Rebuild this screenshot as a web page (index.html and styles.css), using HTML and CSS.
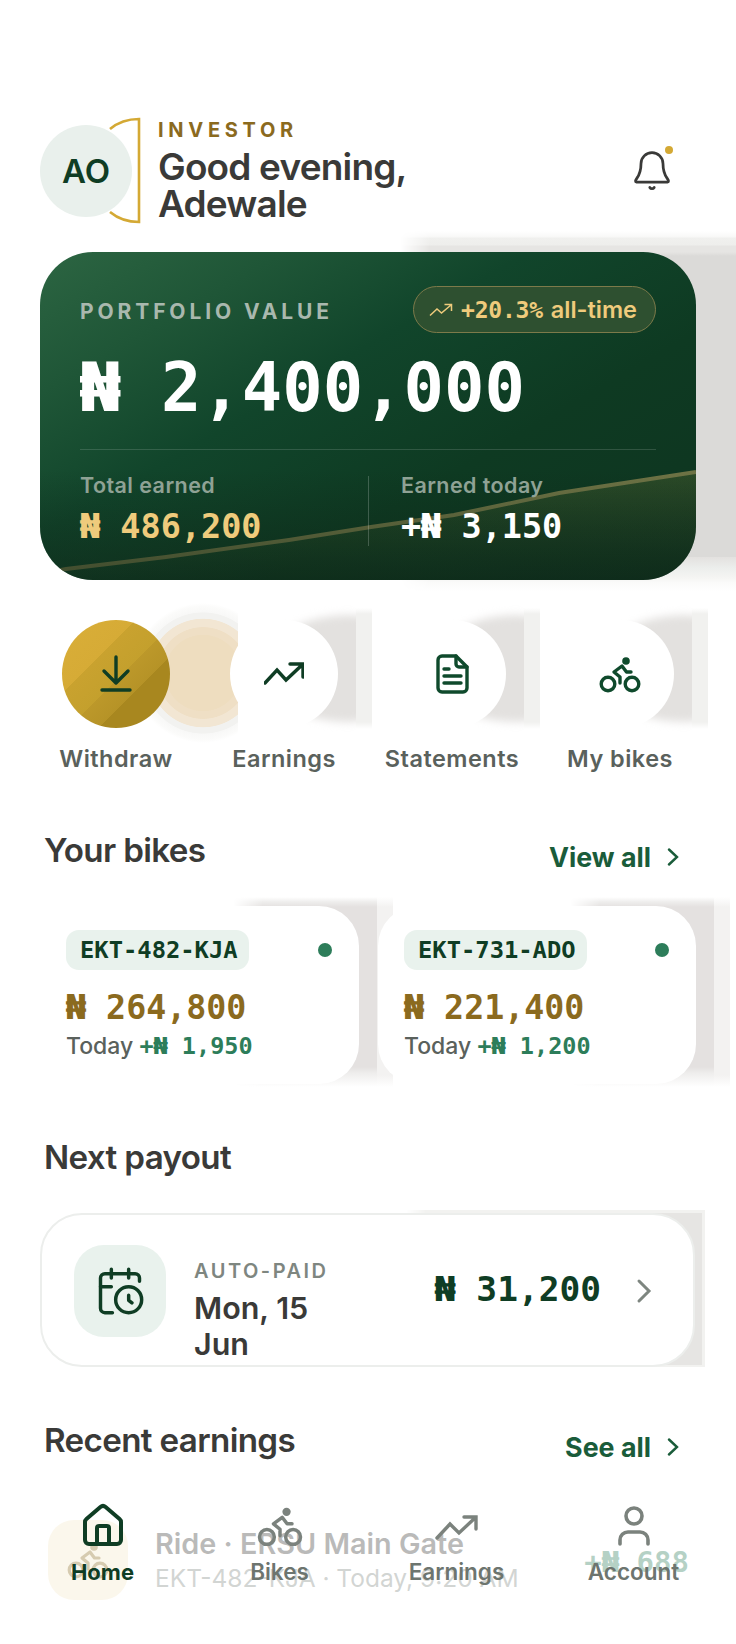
FILE: index.html
```html
<!DOCTYPE html>
<html>
	<head>
		<meta charset="UTF-8">
		<title>Investor home</title>
		<link rel="stylesheet" href="styles.css">
	</head>
	<body>
		<div class="screen">
			<div class="top">
				<div class="avatar-wrap">
					<svg class="ring" width="40" height="107" viewBox="0 0 40 107"><path d="M2 12Q14 2 31 2V105Q14 105 2 95" fill="none" stroke="#d4a934" stroke-width="2.6"/></svg>
					<div class="avatar">AO</div>
				</div>
				<div class="hello">
					<div class="role">INVESTOR</div>
					<h1>Good evening,<br>Adewale</h1>
				</div>
				<div class="bell">
					<svg width="44" height="44" viewBox="0 0 24 24" fill="none" stroke="#3a3a38" stroke-width="1.5" stroke-linecap="round" stroke-linejoin="round"><path d="M6 8a6 6 0 0 1 12 0c0 7 3 8 3 9.500a.5.5 0 0 1-.5.5H3.500a.5.5 0 0 1-.5-.5C3 16 6 15 6 8"/><path d="M10.800 21a1.400 1.400 0 0 0 2.400 0"/></svg>
					<span class="bell-dot"></span>
				</div>
			</div>

			<div class="hero-wrap">
				<div class="hero">
					<svg class="chart" width="656" height="328" viewBox="0 0 656 328">
						<defs>
							<linearGradient id="fill" x1="0" y1="0" x2="0" y2="1">
								<stop offset="0" stop-color="#c9b04a" stop-opacity=".16"/>
								<stop offset="1" stop-color="#c9b04a" stop-opacity="0"/>
							</linearGradient>
						</defs>
						<path d="M0 328V322L26 317 126 305 249 288 331 275 414 263 519 241 656 220V328Z" fill="url(#fill)"/>
						<path d="M0 322L26 317 126 305 249 288 331 275 414 263 519 241 656 220" fill="none" stroke="#6e7345" stroke-width="4"/>
					</svg>
					<div class="hero-top">
						<span class="hero-label">PORTFOLIO VALUE</span>
						<span class="pill">
							<svg width="24" height="14" viewBox="0 0 24 14" fill="none" stroke="#efcb7c" stroke-width="1.500"><path d="M1 12.500L8 6l4.500 4L22 2M15.500 1.500H22.500V8"/></svg>
							<b>+20.3%</b> all-time
						</span>
					</div>
					<div class="hero-amount">₦ 2,400,000</div>
					<div class="hero-line"></div>
					<div class="hero-stats">
						<div class="stat">
							<div class="stat-label">Total earned</div>
							<div class="stat-value gold">₦ 486,200</div>
						</div>
						<div class="stat stat-right">
							<div class="stat-label">Earned today</div>
							<div class="stat-value">+₦ 3,150</div>
						</div>
					</div>
				</div>
			</div>

			<div class="actions">
				<div class="action">
					<div class="btn btn-gold">
						<span class="disc">
							<svg width="40" height="40" viewBox="0 0 40 40" fill="none" stroke="#0f3d24" stroke-width="3.400" stroke-linecap="round" stroke-linejoin="round"><path d="M20 3V29M8 17L20 29 32 17M6 36H34"/></svg>
						</span>
					</div>
					<span class="action-label">Withdraw</span>
				</div>
				<div class="action">
					<div class="btn btn-white">
						<span class="disc">
							<svg width="40" height="40" viewBox="0 0 40 40" fill="none" stroke="#0f3d24" stroke-width="3.400" stroke-linecap="round"><path d="M1 29L13 16 22 26 39 10M26 10H39V23"/></svg>
						</span>
					</div>
					<span class="action-label">Earnings</span>
				</div>
				<div class="action">
					<div class="btn btn-white">
						<span class="disc">
							<svg width="40" height="40" viewBox="0 0 40 40" fill="none" stroke="#0f4a2c" stroke-width="3.400" stroke-linecap="round" stroke-linejoin="round"><path d="M10 2H24L35 13V34A4 4 0 0 1 31 38H10A4 4 0 0 1 6 34V6A4 4 0 0 1 10 2Z"/><path d="M24 2V10A3 3 0 0 0 27 13H35"/><path d="M12 15H17M12 22H29M12 29H29"/></svg>
						</span>
					</div>
					<span class="action-label">Statements</span>
				</div>
				<div class="action">
					<div class="btn btn-white">
						<span class="disc">
							<svg width="44" height="44" viewBox="0 0 44 44" fill="none" stroke="#0f4a2c" stroke-width="3.400" stroke-linecap="round" stroke-linejoin="round"><circle cx="28" cy="9" r="3.800" fill="#0f4a2c" stroke="none"/><circle cx="10" cy="32" r="6.800"/><circle cx="34" cy="32" r="6.800"/><path d="M33 20H28.500L24 14 16 20 22 25V31"/></svg>
						</span>
					</div>
					<span class="action-label">My bikes</span>
				</div>
			</div>

			<div class="sec-head head-bikes">
				<h2>Your bikes</h2>
				<a class="more">View all <svg width="12" height="18" viewBox="0 0 12 18" fill="none" stroke="#1a5c3a" stroke-width="2.400" stroke-linecap="round"><path d="M2 1.500L10 9 2 16.500"/></svg></a>
			</div>
			<div class="bikes">
				<div class="bike">
					<div class="bike-top">
						<span class="plate">EKT-482-KJA</span>
						<span class="live"></span>
					</div>
					<div class="bike-total">₦ 264,800</div>
					<div class="bike-today">Today <b>+₦ 1,950</b></div>
				</div>
				<div class="bike">
					<div class="bike-top">
						<span class="plate">EKT-731-ADO</span>
						<span class="live"></span>
					</div>
					<div class="bike-total">₦ 221,400</div>
					<div class="bike-today">Today <b>+₦ 1,200</b></div>
				</div>
			</div>

			<div class="sec-head head-payout">
				<h2>Next payout</h2>
			</div>
			<div class="payout">
				<div class="payout-icon">
					<svg width="52" height="52" viewBox="0 0 24 24" fill="none" stroke="#0f3d24" stroke-width="1.600" stroke-linecap="round" stroke-linejoin="round"><path d="M21 7.500V6a2 2 0 0 0-2-2H5a2 2 0 0 0-2 2v14a2 2 0 0 0 2 2h3.500"/><path d="M16 2v4M8 2v4M3 10h5M17.500 17.500L16 16.300V14"/><circle cx="16" cy="16" r="6"/></svg>
				</div>
				<div class="payout-text">
					<div class="payout-label">AUTO-PAID</div>
					<div class="payout-date">Mon, 15<br>Jun</div>
				</div>
				<div class="payout-amount">₦ 31,200</div>
				<svg class="payout-arrow" width="16" height="26" viewBox="0 0 16 26" fill="none" stroke="#7e8680" stroke-width="3" stroke-linecap="round"><path d="M3 3L13 13 3 23"/></svg>
			</div>

			<div class="sec-head head-recent">
				<h2>Recent earnings</h2>
				<a class="more">See all <svg width="12" height="18" viewBox="0 0 12 18" fill="none" stroke="#1a5c3a" stroke-width="2.400" stroke-linecap="round"><path d="M2 1.500L10 9 2 16.500"/></svg></a>
			</div>
			<div class="earning">
				<div class="earning-icon">
					<svg width="44" height="44" viewBox="0 0 44 44" fill="none" stroke="#8b6a1e" stroke-width="3.200" stroke-linecap="round" stroke-linejoin="round"><circle cx="28" cy="9" r="3.800" fill="#8b6a1e" stroke="none"/><circle cx="10" cy="32" r="6.800"/><circle cx="34" cy="32" r="6.800"/><path d="M33 20H28.500L24 14 16 20 22 25V31"/></svg>
				</div>
				<div class="earning-text">
					<div class="earning-title">Ride · ERSU Main Gate</div>
					<div class="earning-sub">EKT-482-KJA · Today, 9:20 AM</div>
				</div>
				<div class="earning-amount">+₦ 688</div>
			</div>

			<div class="tabs">
				<div class="tab tab-on">
					<svg width="48" height="48" viewBox="0 0 24 24" fill="none" stroke="#0f3d24" stroke-width="2" stroke-linecap="round" stroke-linejoin="round"><path d="M15 21v-8a1 1 0 0 0-1-1h-4a1 1 0 0 0-1 1v8"/><path d="M3 10a2 2 0 0 1 .709-1.528l7-5.999a2 2 0 0 1 2.582 0l7 5.999A2 2 0 0 1 21 10v9a2 2 0 0 1-2 2H5a2 2 0 0 1-2-2z"/></svg>
					<span>Home</span>
				</div>
				<div class="tab">
					<svg width="48" height="48" viewBox="0 0 44 44" fill="none" stroke="#7b827d" stroke-width="3.200" stroke-linecap="round" stroke-linejoin="round"><circle cx="28" cy="9" r="3.800" fill="#7b827d" stroke="none"/><circle cx="10" cy="32" r="6.800"/><circle cx="34" cy="32" r="6.800"/><path d="M33 20H28.500L24 14 16 20 22 25V31"/></svg>
					<span>Bikes</span>
				</div>
				<div class="tab">
					<svg width="48" height="48" viewBox="0 0 48 48" fill="none" stroke="#7b827d" stroke-width="3.400" stroke-linecap="round"><path d="M4 36L17 22 26 31 43 15M31 15H43V27"/></svg>
					<span>Earnings</span>
				</div>
				<div class="tab">
					<svg width="48" height="48" viewBox="0 0 24 24" fill="none" stroke="#7b827d" stroke-width="1.800" stroke-linecap="round" stroke-linejoin="round"><path d="M19 21v-2a4 4 0 0 0-4-4H9a4 4 0 0 0-4 4v2"/><circle cx="12" cy="7" r="4"/></svg>
					<span>Account</span>
				</div>
			</div>
		</div>
	</body>
</html>
```

FILE: styles.css
```css
*{
	padding: 0;
	margin: 0;
	box-sizing: border-box;
}
html{
	background: #fff;
}
body{
	font-family: Inter, "Liberation Sans", sans-serif;
	color: #3a3a38;
}
.screen{
	position: relative;
	width: 736px;
	height: 1644px;
	padding: 118px 40px 0;
	overflow: hidden;
}

/* header */
.top{
	display: flex;
	align-items: center;
	height: 105px;
}
.avatar-wrap{
	position: relative;
	width: 99px;
	height: 105px;
	display: flex;
	align-items: center;
}
.ring{
	position: absolute;
	left: 68px;
	top: -1px;
}
.avatar{
	position: relative;
	width: 92px;
	height: 92px;
	border-radius: 50%;
	background: #e9f0ec;
	color: #0f3d24;
	font-size: 33px;
	font-weight: 600;
	line-height: 92px;
	text-align: center;
}
.hello{
	margin-left: 19px;
	margin-top: -2px;
}
.role{
	margin-bottom: 6px;
	font-size: 20px;
	font-weight: 700;
	letter-spacing: .235em;
	line-height: 24px;
	color: #8b6a1e;
}
h1{
	font-size: 37px;
	font-weight: 600;
	line-height: 37px;
	letter-spacing: -.022em;
}
.bell{
	position: relative;
	margin-left: auto;
	margin-right: 22px;
	width: 44px;
	height: 44px;
}
.bell-dot{
	position: absolute;
	right: 1px;
	top: -3px;
	width: 8px;
	height: 8px;
	border-radius: 50%;
	background: #d4a934;
}

/* portfolio card */
.hero-wrap{
	position: relative;
	margin-top: 29px;
}
.hero-wrap::before{
	content: "";
	position: absolute;
	left: 360px;
	right: -40px;
	top: -24px;
	bottom: -12px;
	background: linear-gradient(to bottom, #fff 0, #fff 3px, #f8f8f7 9px, #f0f0ee 10px, #eeeeec 17px, #e6e5e3 18px, #e6e5e3 24px, #dbdad8 28px, #dbdad8 329px, #e3e1df 329px, #eceeec 340px, #f5f5f3 350px, #fbfbfa 355px, #fff 364px);
	-webkit-mask-image: linear-gradient(to right, transparent, #000 30px);
	mask-image: linear-gradient(to right, transparent, #000 30px);
}
.hero{
	position: relative;
	height: 328px;
	padding: 34px 40px 0;
	border-radius: 53px;
	overflow: hidden;
	color: #fff;
	background: linear-gradient(150deg, #2c6542 0%, #1f5637 20%, #11452b 40%, #0e3a22 65%, #0e3420 100%);
}
.chart{
	position: absolute;
	left: 0;
	top: 0;
}
.hero::after{
	content: "";
	position: absolute;
	left: 0;
	right: 0;
	bottom: 0;
	height: 110px;
	background: linear-gradient(to bottom, transparent, rgba(15,35,22,.5));
}
.hero-top,.hero-amount,.hero-line,.hero-stats{
	position: relative;
	z-index: 1;
}
.hero-top{
	display: flex;
	justify-content: space-between;
	align-items: center;
	height: 47px;
}
.hero-label{
	position: relative;
	top: 2px;
	font-size: 21px;
	font-weight: 700;
	letter-spacing: .185em;
	color: #a9b8ae;
}
.pill{
	display: flex;
	align-items: center;
	gap: 8px;
	height: 47px;
	padding: 0 18px 0 15px;
	border: 1.5px solid #7d7a4a;
	border-radius: 24px;
	background: #2e5030;
	color: #efcb7c;
	font-size: 23.5px;
	font-weight: 600;
}
.pill b{
	font-family: "DejaVu Sans Mono", monospace;
	font-size: 23px;
	letter-spacing: -.01em;
}
.hero-amount{
	margin-top: 13px;
	font-family: "DejaVu Sans Mono", monospace;
	font-size: 67.200px;
	font-weight: 700;
	line-height: 84px;
	white-space: nowrap;
}
.hero-line{
	height: 1px;
	margin-top: 19px;
	background: rgba(255,255,255,.14);
}
.hero-stats{
	display: flex;
	margin-top: 26px;
}
.stat{
	width: 289px;
	height: 70px;
}
.stat-right{
	padding-left: 32px;
	border-left: 1px solid rgba(255,255,255,.2);
}
.stat-label{
	margin-top: -3px;
	font-size: 21.500px;
	font-weight: 600;
	line-height: 24px;
	letter-spacing: .02em;
	color: #8fa295;
}
.stat-value{
	margin-top: 11px;
	font-family: "DejaVu Sans Mono", monospace;
	font-size: 33.5px;
	font-weight: 700;
	line-height: 38px;
	white-space: nowrap;
}
.gold{
	color: #efcb7c;
}

/* quick actions */
.actions{
	display: grid;
	grid-template-columns: repeat(4, 168px);
	margin: 40px -8px 0;
}
.action{
	display: flex;
	flex-direction: column;
	align-items: center;
}
.btn{
	position: relative;
	width: 108px;
	height: 108px;
}
.disc{
	position: relative;
	display: flex;
	align-items: center;
	justify-content: center;
	width: 108px;
	height: 108px;
	border-radius: 50%;
	background: #fff;
}
.btn-gold .disc{
	background: linear-gradient(135deg, #d9ae38 0, #d6ab36 34%, #c9a22f 34%, #c4a02d 53%, #bc982a 53%, #b69327 67%, #a8871f 67%, #a8871f 100%);
}
.btn-gold::before{
	content: "";
	position: absolute;
	left: 71px;
	top: -17px;
	width: 140px;
	height: 140px;
	border-radius: 50%;
	clip-path: inset(0 35px 0 0);
	background: radial-gradient(circle closest-side, #eeddbf 0, #eeddbf 54%, #efdfc5 55%, #efdfc5 65%, #f2e6d3 66%, #f2e6d3 77%, #f2f2f0 78%, #f2f2f0 86%, #f8f8f7 87%, #fbfbfa 95%, #fff 100%);
}
.btn-white::before{
	content: "";
	position: absolute;
	left: 35px;
	width: 135px;
	top: -5px;
	height: 107px;
	z-index: -1;
	border-radius: 90px 54px 54px 90px / 54px;
	background: #e3e1df;
	filter: blur(4px);
	clip-path: inset(-20px 44px -20px -20px);
}
.btn-white::after{
	content: "";
	position: absolute;
	left: 126px;
	width: 16px;
	top: -12px;
	bottom: -1px;
	z-index: -1;
	background: linear-gradient(to bottom, #fff 0, #f1f1ef 6px, #f1f1ef 114px, #fff 121px);
}
.action-label{
	margin-top: 17px;
	font-size: 23.5px;
	font-weight: 600;
	line-height: 28px;
	letter-spacing: .02em;
	color: #5a615c;
}

/* sections */
.sec-head{
	display: flex;
	justify-content: space-between;
	align-items: baseline;
	padding-left: 4px;
}
.head-bikes{
	margin-top: 57px;
}
.head-payout{
	margin-top: 53px;
}
.head-recent{
	margin-top: 53px;
}
h2{
	font-size: 33.2px;
	font-weight: 600;
	line-height: 40px;
	letter-spacing: -.02em;
}
.more{
	display: flex;
	align-items: center;
	gap: 16px;
	padding-right: 17px;
	font-size: 26.8px;
	font-weight: 700;
	color: #1a5c3a;
	position: relative;
	top: 5px;
}

/* bikes */
.bikes{
	display: flex;
	gap: 19px;
	margin-top: 36px;
}
.bike{
	position: relative;
	width: 319px;
	height: 178px;
	padding: 24px 24px 0 26px;
	border-radius: 40px;
	background: #fff;
}
.bike::before{
	content: "";
	position: absolute;
	right: -18px;
	width: 144px;
	top: -9px;
	bottom: -3px;
	z-index: -1;
	background: linear-gradient(to bottom, #fff 0, #eeedec 5px, #e4e1e0 10px, #e4e1e0 170px, #eeedec 176px, #fff 190px);
	-webkit-mask-image: linear-gradient(to right, transparent, #000 30px);
	mask-image: linear-gradient(to right, transparent, #000 30px);
}
.bike::after{
	content: "";
	position: absolute;
	right: -34px;
	width: 16px;
	top: -9px;
	bottom: -3px;
	z-index: -1;
	background: linear-gradient(to bottom, #fff 0, #f3f2f1 10px, #f3f2f1 178px, #fff 190px);
}
.bike + .bike{
	width: 318px;
}
.bike-top{
	display: flex;
	justify-content: space-between;
	align-items: center;
}
.plate{
	height: 40px;
	padding: 1px 11px 0 14px;
	border-radius: 13px;
	background: #e9f2ed;
	color: #0f3d24;
	font-family: "DejaVu Sans Mono", monospace;
	font-size: 23.8px;
	font-weight: 700;
	line-height: 39px;
}
.live{
	width: 14px;
	height: 14px;
	margin-right: 3px;
	border-radius: 50%;
	background: #2d7d5a;
}
.bike-total{
	margin-top: 18px;
	font-family: "DejaVu Sans Mono", monospace;
	font-size: 33.3px;
	font-weight: 700;
	line-height: 40px;
	color: #8b6a1e;
}
.bike-today{
	margin-top: 4px;
	font-size: 23px;
	font-weight: 500;
	line-height: 28px;
	color: #5a615c;
}
.bike-today b{
	font-family: "DejaVu Sans Mono", monospace;
	font-size: 23.5px;
	color: #2d7d5a;
}

/* payout */
.payout{
	position: relative;
	display: flex;
	align-items: center;
	width: 655px;
	height: 154px;
	margin-top: 36px;
	padding: 0 41px 0 32px;
	border: 2px solid #eceeec;
	border-radius: 42px;
	background: #fff;
}
.payout::before{
	content: "";
	position: absolute;
	right: -12px;
	width: 299px;
	top: -5px;
	bottom: -2px;
	z-index: -1;
	background: linear-gradient(to right, transparent calc(100% - 3px), #f2f2f0 0), linear-gradient(to bottom, #f2f2f0 0, #f2f2f0 3px, #e6e5e3 3px, #e6e5e3 calc(100% - 2px), #f2f2f0 0);
	-webkit-mask-image: linear-gradient(to right, transparent, #000 20px);
	mask-image: linear-gradient(to right, transparent, #000 20px);
}
.payout-icon{
	display: flex;
	align-items: center;
	justify-content: center;
	width: 92px;
	height: 92px;
	margin-top: 2px;
	border-radius: 30px;
	background: #e9f2ed;
}
.payout-text{
	margin-left: 28px;
	margin-top: 40px;
}
.payout-label{
	font-size: 20px;
	font-weight: 600;
	letter-spacing: .125em;
	line-height: 24px;
	color: #7e8680;
}
.payout-date{
	margin-top: 7px;
	font-size: 30.500px;
	font-weight: 600;
	line-height: 36px;
}
.payout-amount{
	margin-left: auto;
	margin-right: 35px;
	margin-top: -2px;
	font-family: "DejaVu Sans Mono", monospace;
	font-size: 34.500px;
	font-weight: 700;
	color: #0f3d24;
}
.payout-arrow{
	margin-top: 1px;
}

/* recent */
.earning{
	display: flex;
	align-items: center;
	margin-top: 60px;
	padding-left: 8px;
}
.earning-icon{
	display: flex;
	align-items: center;
	justify-content: center;
	width: 80px;
	height: 80px;
	border-radius: 26px;
	background: #f4e8c9;
}
.earning-text{
	margin-left: 27px;
}
.earning-title{
	font-size: 28.8px;
	font-weight: 600;
	line-height: 36px;
}
.earning-sub{
	font-size: 24.500px;
	line-height: 32px;
	color: #7e8680;
}
.earning-amount{
	margin-left: auto;
	margin-right: 7px;
	margin-top: 4px;
	font-family: "DejaVu Sans Mono", monospace;
	font-size: 29px;
	font-weight: 700;
	color: #2d7d5a;
}

/* bottom tabs */
.tabs{
	position: absolute;
	left: 0;
	right: 0;
	bottom: 0;
	display: grid;
	grid-template-columns: repeat(4, 177px);
	height: 154px;
	padding: 12px 14px 0;
	background: rgba(255,255,255,.65);
}
.tab{
	display: flex;
	flex-direction: column;
	align-items: center;
	font-size: 22.500px;
	font-weight: 600;
	line-height: 26px;
	color: #6d756f;
}
.tab span{
	margin-top: 9px;
}
.tab-on{
	font-size: 22px;
	font-weight: 700;
	color: #0f3d24;
}
```
